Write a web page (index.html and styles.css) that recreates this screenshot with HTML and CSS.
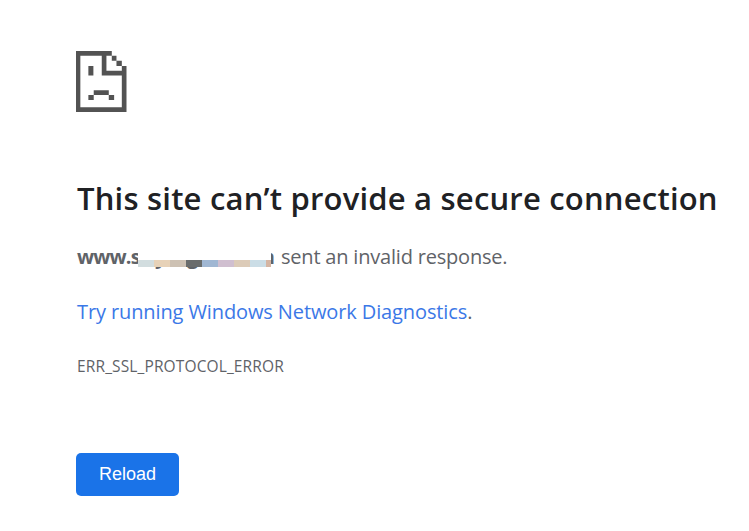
FILE: index.html
```html
<!doctype html>
<html lang="en">
<head>
	<meta charset="utf-8" />
	<title>Privacy error</title>
	<link rel="stylesheet" href="styles.css">
</head>
<body>
	<div class="content">
		<svg class="icon" viewBox="31 27 151 182">
			<path d="M31 27H138V41H152V56H168V72H182V209H31ZM44 41V195H168V100H108V41ZM122 41V86H168V72H152V56H138V41Z" fill-rule="evenodd" />
			<path d="M68 72H83V100H68ZM84 144H129V158H84ZM68 158H84V173H68ZM129 158H145V173H129Z" />
		</svg>
		<h1>This site can’t provide a secure connection</h1>
		<p class="summary"><strong class="host">www.s<span class="letter-y">y</span><span class="letter-g">g</span><span class="letter-m">m</span><span class="mask"><i class="c1"></i><i class="c2"></i><i class="c3"></i><i class="c4"></i><i class="c5"></i><i class="c6"></i><i class="c7"></i><i class="c8"></i><i class="c9"></i></span></strong><span class="response">sent an invalid response.</span></p>
		<p class="diagnose"><a>Try running Windows Network Diagnostics</a>.</p>
		<div class="code">ERR_SSL_PROTOCOL_ERROR</div>
		<button>Reload</button>
	</div>
</body>
</html>
```

FILE: styles.css
```css
body { margin: 0; background: #fff; color: #5f6368; font-family: 'Open Sans', 'Noto Sans', sans-serif; }
.content { display: flex; flex-direction: column; align-items: flex-start; padding: 51px 0 0 76px; white-space: nowrap; }
.icon { display: block; width: 50.5px; height: 61px; fill: #535353; }
h1 { margin: 65px 0 0 1px; color: #202124; font-size: 31px; font-weight: 600; line-height: 42px; letter-spacing: 0.2px; }
p { margin: 0 0 0 1px; font-size: 20px; line-height: 30px; }
.summary { display: flex; margin-top: 23px; }
.host { position: relative; width: 204px; height: 30px; font-weight: 700; letter-spacing: -0.85px; }
.response { letter-spacing: -0.2px; }
.letter-y { position: absolute; left: 78px; }
.letter-g { position: absolute; left: 110px; }
.letter-m { position: absolute; right: 7px; }
.mask { position: absolute; left: 61px; top: 0; display: flex; align-items: flex-end; width: 133px; height: 25px; background: #fff; }
.mask i { width: 16px; height: 7px; }
.mask .c1 { background: #d2dddf; }
.mask .c2 { background: #e7d2b8; }
.mask .c3 { background: #cdc1b3; }
.mask .c4 { background: #696c6c; }
.mask .c5 { background: #a0b7d3; }
.mask .c6 { background: #d0bfd0; }
.mask .c7 { background: #dccbb8; }
.mask .c8 { background: #cbdde6; }
.mask .c9 { width: 5px; background: #d5b5a3; }
.diagnose { margin-top: 25px; letter-spacing: -0.11px; }
a { color: #3b78e7; }
.code { margin: 27px 0 0 1px; font-size: 15.5px; line-height: 24px; letter-spacing: 0.13px; }
button { width: 103px; height: 43px; margin-top: 75px; padding: 0; border: 0; border-radius: 5px; background: #1a73e8; color: #fff; font: 18px 'Liberation Sans', Arial, sans-serif; }
```
